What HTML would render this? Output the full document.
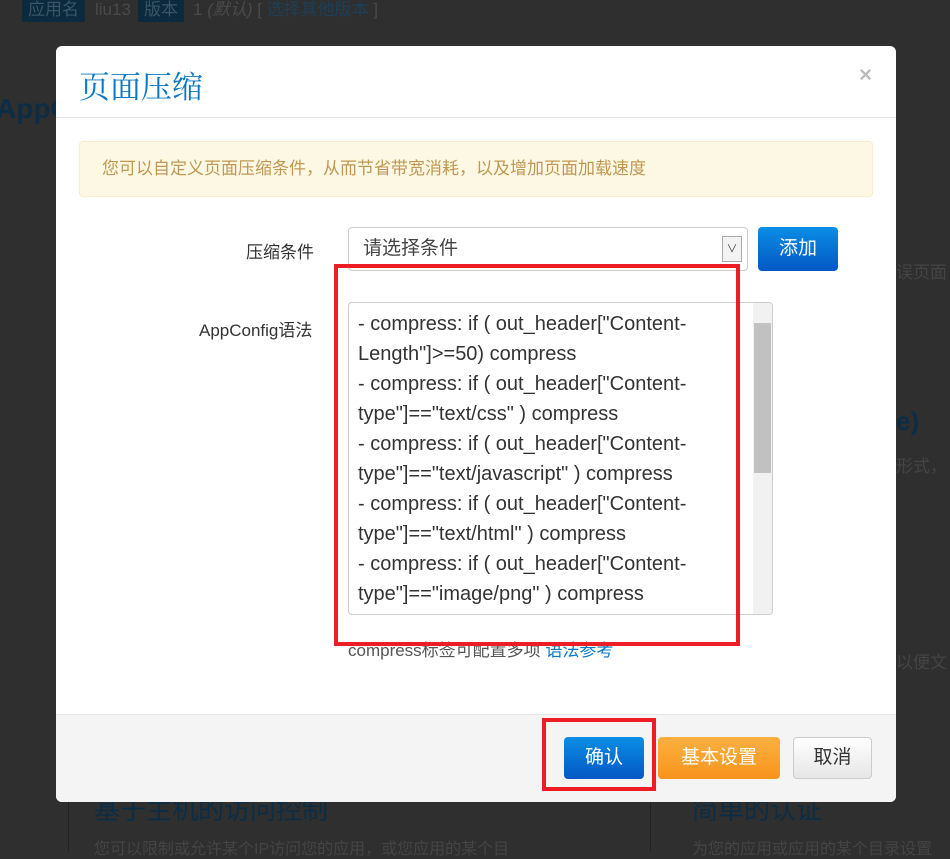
<!DOCTYPE html>
<html><head><meta charset="utf-8"><style>
body{margin:0;width:950px;height:852px;background:#2f2f2f;font-family:"Liberation Sans","Noto Sans CJK SC",sans-serif;position:relative;overflow:hidden}
.a{position:absolute;white-space:nowrap}
</style></head><body>
<div class="a" style="left:22px;top:0;height:22px;background:#0b2a3d;font-size:17px;padding:0 6px;line-height:20px;color:#3b5566">应用名</div>
<div class="a" style="left:95px;top:0;font-size:17px;line-height:20px;color:#4a4a4a">liu13</div>
<div class="a" style="left:138px;top:0;height:22px;background:#0b2a3d;padding:0 6px;font-size:17px;line-height:20px;color:#3b5566">版本</div>
<div class="a" style="left:193px;top:0;font-size:17px;line-height:20px;color:#4a4a4a">1 <i>(默认)</i> [ <span style="color:#1d3f58">选择其他版本</span> ]</div>
<div class="a" style="left:-4px;top:93px;font-size:28px;font-weight:bold;color:#0d2d45">AppC</div>
<div class="a" style="left:896px;top:258px;font-size:17px;color:#444">误页面</div>
<div class="a" style="left:896px;top:406px;font-size:26px;font-weight:bold;color:#0d2d45">e)</div>
<div class="a" style="left:896px;top:452px;font-size:17px;color:#444">形式，</div>
<div class="a" style="left:896px;top:648px;font-size:17px;color:#444">以便文</div>
<div class="a" style="left:94px;top:790px;font-size:26px;color:#0d2d45">基于主机的访问控制</div>
<div class="a" style="left:94px;top:835px;font-size:16px;color:#444">您可以限制或允许某个IP访问您的应用，或您应用的某个目</div>
<div class="a" style="left:692px;top:790px;font-size:26px;color:#0d2d45">简单的认证</div>
<div class="a" style="left:692px;top:835px;font-size:16px;color:#444">为您的应用或应用的某个目录设置</div>
<div class="a" style="left:68px;top:790px;width:1px;height:62px;background:#222"></div>
<div class="a" style="left:650px;top:790px;width:1px;height:62px;background:#222"></div>

<div class="a" style="left:56px;top:46px;width:840px;height:756px;background:#fff;border-radius:6px;overflow:hidden">
 <div class="a" style="left:23px;top:16px;font-size:31px;color:#0a78c2;font-family:'Noto Serif CJK SC',serif">页面压缩</div>
 <div class="a" style="right:24px;top:16px;font-size:22px;color:#bbb;font-weight:bold">×</div>
 <div class="a" style="left:0;top:71px;width:840px;height:1px;background:#e5e5e5"></div>
 <div class="a" style="left:23px;top:95px;width:794px;height:56px;background:#fcf8e3;border:1px solid #faebcc;border-radius:4px;box-sizing:border-box;color:#c09853;font-size:17px;line-height:54px;padding-left:22px">您可以自定义页面压缩条件，从而节省带宽消耗，以及增加页面加载速度</div>
 <div class="a" style="left:190px;top:192px;font-size:17px;color:#333">压缩条件</div>
 <div class="a" style="left:292px;top:181px;width:400px;height:44px;border:1px solid #ccc;border-radius:4px;box-sizing:border-box;font-size:19px;color:#444;line-height:42px;padding-left:14px">请选择条件
  <div class="a" style="right:5px;top:8px;width:20px;height:26px;border:1px solid #aaa;background:#f3f3f3;box-sizing:border-box;font-size:11px;line-height:24px;text-align:center">∨</div></div>
 <div class="a" style="left:702px;top:181px;width:80px;height:44px;background:linear-gradient(#0a8ee6,#0457c4);border-radius:4px;color:#fff;font-size:19px;text-align:center;line-height:44px">添加</div>
 <div class="a" style="left:143px;top:270px;font-size:17px;color:#333">AppConfig语法</div>
 <div class="a" style="left:292px;top:256px;width:425px;height:313px;border:1px solid #ccc;border-radius:4px;box-sizing:border-box;overflow:hidden">
  <div style="padding:6px 0 0 9px;width:370px;font-size:20px;line-height:30px;color:#333;white-space:normal">- compress: if ( out_header["Content-Length"]&gt;=50) compress<br>- compress: if ( out_header["Content-type"]=="text/css" ) compress<br>- compress: if ( out_header["Content-type"]=="text/javascript" ) compress<br>- compress: if ( out_header["Content-type"]=="text/html" ) compress<br>- compress: if ( out_header["Content-type"]=="image/png" ) compress</div>
  <div class="a" style="right:0;top:0;width:19px;height:311px;background:#f1f1f1"></div>
  <div class="a" style="right:1px;top:20px;width:17px;height:150px;background:#c1c1c1"></div>
 </div>
 <div class="a" style="left:292px;top:590px;font-size:17px;color:#555">compress标签可配置多项 <span style="color:#0a78c2">语法参考</span></div>
 <div class="a" style="left:278px;top:218px;width:406px;height:382px;border:4px solid #ee1c25;box-sizing:border-box"></div>
 <div class="a" style="left:0;top:668px;width:840px;height:88px;background:#f4f4f4;border-top:1px solid #e5e5e5"></div>
 <div class="a" style="left:508px;top:691px;width:80px;height:42px;background:linear-gradient(#0a8ee6,#0457c4);border-radius:4px;color:#fff;font-size:19px;text-align:center;line-height:42px">确认</div>
 <div class="a" style="left:602px;top:691px;width:122px;height:42px;background:linear-gradient(#fbb040,#f7941d);border-radius:4px;color:#fff;font-size:19px;text-align:center;line-height:42px">基本设置</div>
 <div class="a" style="left:737px;top:691px;width:79px;height:42px;background:linear-gradient(#fff,#e6e6e6);border:1px solid #ccc;box-sizing:border-box;border-radius:4px;color:#333;font-size:19px;text-align:center;line-height:40px">取消</div>
 <div class="a" style="left:486px;top:672px;width:114px;height:73px;border:4px solid #ee1c25;box-sizing:border-box"></div>
</div>
</body></html>
